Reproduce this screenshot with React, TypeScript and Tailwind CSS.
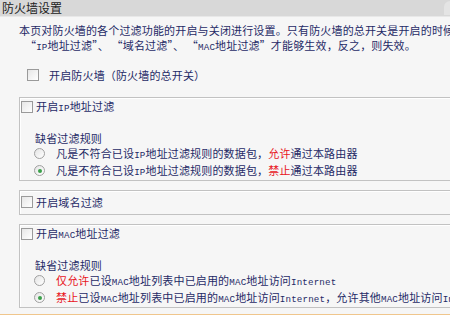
import React from "react";

const L = ({ children }: { children: React.ReactNode }) => (
  <span className="font-['Liberation_Mono',monospace] text-[9.2px]">{children}</span>
);

const Check = () => (
  <span className="inline-block w-[12px] h-[12px] shrink-0 border border-[#9a9a9a] bg-gradient-to-br from-[#e6e6e6] to-[#ffffff]" />
);

const Radio = ({ checked }: { checked?: boolean }) => (
  <span className="inline-flex w-[11px] h-[11px] shrink-0 rounded-full border border-[#a0a0a0] bg-gradient-to-br from-[#e4e4e4] to-[#ffffff] items-center justify-center">
    {checked && <span className="w-[4px] h-[4px] rounded-full bg-[#3aa04a]" />}
  </span>
);

const Red = ({ children }: { children: React.ReactNode }) => (
  <span className="text-[#e8141c]">{children}</span>
);

export default function App() {
  return (
    <div className="w-[450px] h-[315px] overflow-hidden bg-[#f6f6f6] flex flex-col font-['Noto_Sans_CJK_SC',sans-serif] text-[#1f2a66] text-[11px] tracking-[0.16px] whitespace-nowrap">
      <div className="h-[17px] shrink-0 bg-[#d8d8d8] flex items-center justify-between pl-[2px] border-b border-[#e8e8e8]">
        <span className="text-[12px] leading-[16px] text-[#222] tracking-normal">防火墙设置</span>
        <span className="w-[6px] h-[14px] rounded-tl-full bg-[#e4e4e4]" />
      </div>

      <div className="mt-[6px] pl-[19px] leading-[15px]">
        <div>本页对防火墙的各个过滤功能的开启与关闭进行设置。只有防火墙的总开关是开启的时候</div>
        <div className="pl-[6px]">
          “<L>IP</L>地址过滤”、 “域名过滤”、 “<L>MAC</L>地址过滤”才能够生效，反之，则失效。
        </div>
      </div>

      <div className="mt-[13px] h-[14px] flex items-center pl-[27px] gap-[10px]">
        <Check />
        <span>开启防火墙（防火墙的总开关）</span>
      </div>

      <div className="mt-[15px] ml-[19px] h-[84px] shrink-0 border border-r-0 border-[#c2c2c2] shadow-[inset_1px_1px_0_#ffffff] flex flex-col">
        <div className="mt-[2px] h-[14px] flex items-center pl-[1px] gap-[3px]">
          <Check />
          <span>开启<L>IP</L>地址过滤</span>
        </div>
        <div className="mt-[17px] h-[14px] flex items-center pl-[15px]">缺省过滤规则</div>
        <div className="h-[17px] flex items-center pl-[14px] gap-[11px]">
          <Radio />
          <span>凡是不符合已设<L>IP</L>地址过滤规则的数据包，<Red>允许</Red>通过本路由器</span>
        </div>
        <div className="h-[17px] flex items-center pl-[14px] gap-[11px]">
          <Radio checked />
          <span>凡是不符合已设<L>IP</L>地址过滤规则的数据包，<Red>禁止</Red>通过本路由器</span>
        </div>
      </div>

      <div className="mt-[9px] ml-[19px] h-[25px] shrink-0 border border-r-0 border-[#c2c2c2] shadow-[inset_1px_1px_0_#ffffff] flex flex-col">
        <div className="mt-[4px] h-[14px] flex items-center pl-[1px] gap-[3px]">
          <Check />
          <span>开启域名过滤</span>
        </div>
      </div>

      <div className="mt-[9px] ml-[19px] h-[84px] shrink-0 border border-r-0 border-[#c2c2c2] shadow-[inset_1px_1px_0_#ffffff] flex flex-col">
        <div className="mt-[2px] h-[14px] flex items-center pl-[1px] gap-[3px]">
          <Check />
          <span>开启<L>MAC</L>地址过滤</span>
        </div>
        <div className="mt-[17px] h-[14px] flex items-center pl-[15px]">缺省过滤规则</div>
        <div className="h-[17px] flex items-center pl-[14px] gap-[11px]">
          <Radio />
          <span><Red>仅允许</Red>已设<L>MAC</L>地址列表中已启用的<L>MAC</L>地址访问<L>Internet</L></span>
        </div>
        <div className="h-[17px] flex items-center pl-[14px] gap-[11px]">
          <Radio checked />
          <span><Red>禁止</Red>已设<L>MAC</L>地址列表中已启用的<L>MAC</L>地址访问<L>Internet</L>，允许其他<L>MAC</L>地址访问<L>Internet</L></span>
        </div>
      </div>

      <div className="mt-[6px] h-[1px] shrink-0 bg-[#f0c68c]" />
    </div>
  );
}
